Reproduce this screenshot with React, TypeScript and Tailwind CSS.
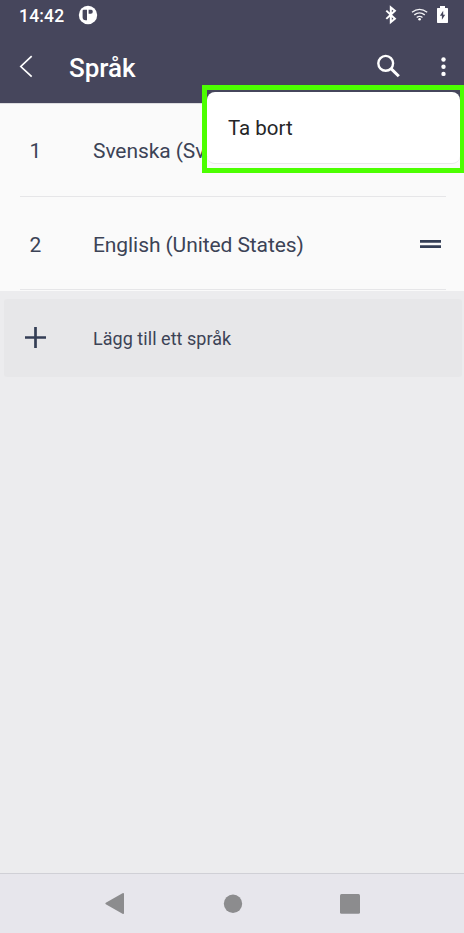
import React from "react";

function StatusBar() {
  return (
    <div className="flex h-[31px] items-center pl-[19px] text-white">
      <span className="w-[59px] pt-px text-[17.5px] leading-[31px] font-medium tracking-[0.2px]">14:42</span>
      <svg className="mt-[-2px] h-5 w-5" viewBox="0 0 20 20">
        <circle cx="10" cy="10" r="9.2" fill="#fff" />
        <path d="M5.600 4.800H9v10.400H7.600Q4.600 14.900 4.600 12.400V5.800q0-1 1-1zM10.600 4.800h2.700q1.500.2 1.500 1.900 0 2-2 2h-2.200z" fill="#46465c" />
      </svg>
      <svg className="ml-auto h-[31px] w-[80px]" viewBox="384 0 80 31">
        <path d="M386.300 10.600l8.600 8.200-4.100 3.300V7.400l4.100 3.300-8.600 8.200" fill="none" stroke="#fff" strokeWidth="2" />
        <g fill="none" stroke="#f2f2f5" strokeWidth="1.400">
          <path d="M412 12.200q7.500-5.700 15.200 0M414.300 14.900q5.200-4 10.500 0M416.700 17.500q2.900-2.200 5.800 0" />
        </g>
        <circle cx="419.600" cy="19.300" r="1.300" fill="#fff" />
        <path d="M440 6h5v2h2.300q.7 0 .7.700v13.600q0 .7-.7.700h-9.600q-.7 0-.7-.7V8.700q0-.7.7-.7h2.300z" fill="#fff" />
        <path d="M443.200 10.800v4h2l-3.300 5v-4h-2z" fill="#46465c" />
      </svg>
    </div>
  );
}

function TitleBar() {
  return (
    <div className="flex h-[72px] items-start text-white">
      <svg className="h-[72px] w-[69px]" viewBox="0 31 69 72">
        <path d="M31.700 56.200L20.800 66.500l10.900 10.200" fill="none" stroke="#fff" strokeWidth="1.700" />
      </svg>
      <h1 className="text-[26px] leading-[75px] font-medium">Språk</h1>
      <svg className="ml-auto h-[54px] w-[94px]" viewBox="370 31 94 54">
        <circle cx="385.700" cy="63.300" r="7.400" fill="none" stroke="#fff" strokeWidth="2.400" />
        <path d="M391 68.600l7.800 7.700" stroke="#fff" strokeWidth="3" />
        <g fill="#fff">
          <circle cx="443.500" cy="59.500" r="2.200" />
          <circle cx="443.500" cy="66.700" r="2.200" />
          <circle cx="443.500" cy="73.900" r="2.200" />
        </g>
      </svg>
    </div>
  );
}

function LanguageRow({ index, name, handle }: { index: number; name: string; handle?: boolean }) {
  const offset = handle ? "pt-[5px]" : "pt-[3px]";
  return (
    <div className={`ml-5 mr-[18px] flex h-[93px] items-center border-b border-[#e6e6e8] text-[21px] text-[#3c4356] ${offset}`}>
      <span className="w-[73px] pl-[9.5px]">{index}</span>
      <span className="whitespace-nowrap tracking-[-0.08px]">{name}</span>
      {handle && (
        <svg className="mt-[-4px] ml-auto mr-[5px] h-2 w-[21px]" viewBox="0 0 21 8">
          <path d="M0 0h21v2.700H0zM0 5.300h21V8H0z" fill="#343e55" />
        </svg>
      )}
    </div>
  );
}

function PopupMenu() {
  return (
    <div className="absolute top-[85px] right-0 h-[88px] w-[262px] border-[5px] border-r-4 border-[#4cff00]">
      <div className="mt-[2px] h-[72px] rounded-[8px] border-b border-[#e8e8ea] bg-white pl-[21px] text-[20.500px] leading-[73px] text-[#252527]">
        Ta bort
      </div>
    </div>
  );
}

export default function App() {
  return (
    <div className="relative flex h-[933px] w-[464px] flex-col overflow-hidden bg-[#ececee] font-[Roboto,sans-serif]">
      <header className="h-[103px] shrink-0 bg-[#46465c]">
        <StatusBar />
        <TitleBar />
      </header>
      <main className="flex-1">
        <section className="h-[188px] border-t border-[#dcdcdf] bg-[#fafafa]">
          <LanguageRow index={1} name="Svenska (Sverige)" />
          <LanguageRow index={2} name="English (United States)" handle />
        </section>
        <button className="mt-2 ml-1 flex h-[78px] w-[458px] items-center rounded-[3px] bg-[#e7e7e9] pl-[21px] text-[18px] text-[#3c4356]">
          <svg className="mt-[-2px] h-[21px] w-[21px]" viewBox="0 0 21 21">
            <path d="M0 10.500h21M10.500 0v21" stroke="#343e55" strokeWidth="2.700" />
          </svg>
          <span className="ml-[47px] tracking-[0.04px]">Lägg till ett språk</span>
        </button>
      </main>
      <nav className="h-[60px] shrink-0 border-t border-[#d0d0d6] bg-[#e7e6ec]">
        <svg className="h-[59px] w-[464px]" viewBox="0 874 464 59" fill="#8c8c8e">
          <path d="M105.800 902.800l16.700-9.500q1.500-.7 1.500.8v18.800q0 1.500-1.500.8l-16.700-9.500q-1-.7 0-1.400z" />
          <circle cx="233" cy="903.700" r="9.200" />
          <rect x="340" y="894" width="20" height="19.700" rx="1.500" />
        </svg>
      </nav>
      <PopupMenu />
    </div>
  );
}
